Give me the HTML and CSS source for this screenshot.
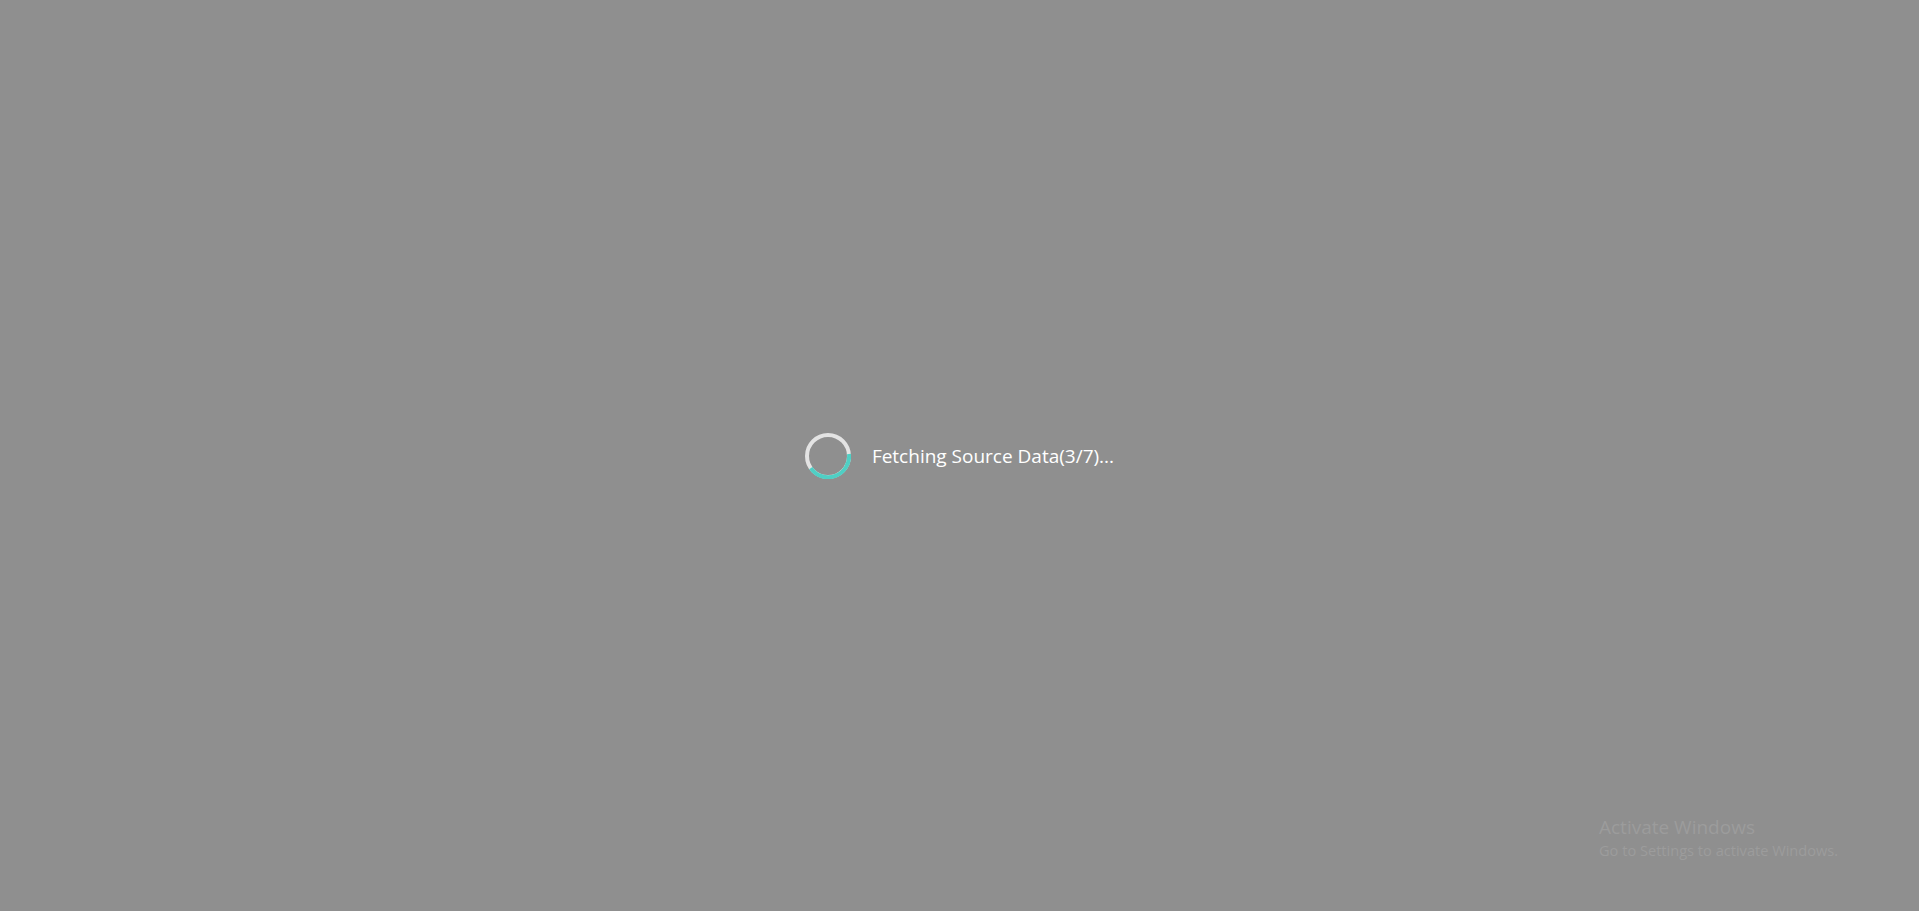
FILE: index.html
```html
<!DOCTYPE html>
<html>
<head>
<meta charset="utf-8">
<link rel="stylesheet" href="styles.css">
</head>
<body>
<div class="overlay">
  <div class="loader">
    <svg class="spinner" width="46" height="46" viewBox="0 0 46 46">
      <circle cx="23" cy="23" r="21" fill="none" stroke="#e3e3e3" stroke-width="4"/>
      <path d="M44 21 A21 21 0 0 1 5.8 35.1" fill="none" stroke="#4fcfc4" stroke-width="4"/>
    </svg>
    <span class="label">Fetching Source Data(3/7)...</span>
  </div>
</div>
<div class="watermark">
  <div class="wm-title">Activate Windows</div>
  <div class="wm-sub">Go to Settings to activate Windows.</div>
</div>
</body>
</html>
```
FILE: styles.css
```css
html, body {
  margin: 0;
  padding: 0;
  height: 100%;
}
body {
  background: #8f8f8f;
  font-family: "Open Sans", "Noto Sans", sans-serif;
  overflow: hidden;
}
.overlay {
  height: 100%;
  display: flex;
  align-items: center;
  justify-content: center;
}
.loader {
  display: flex;
  align-items: center;
  gap: 21px;
}
.spinner {
  display: block;
}
.label {
  color: #ffffff;
  font-size: 19px;
}
.watermark {
  position: absolute;
  left: 1599px;
  top: 814px;
  color: #9c9c9c;
}
.wm-title {
  font-size: 19px;
  line-height: 26px;
}
.wm-sub {
  font-size: 14.6px;
  line-height: 20px;
}
```
